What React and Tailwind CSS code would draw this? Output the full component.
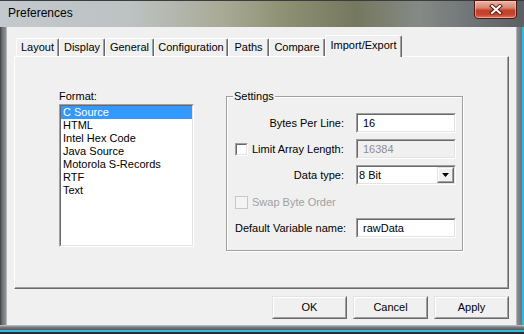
import React from "react";

function Sunken({ className = "", inner = "", children }) {
  return (
    <div className={"border border-t-[#a0a0a0] border-l-[#a0a0a0] border-b-white border-r-white " + className}>
      <div className={"h-full border border-t-[#696969] border-l-[#696969] border-b-[#e3e3e3] border-r-[#e3e3e3] " + inner}>
        {children}
      </div>
    </div>
  );
}

function Raised({ className = "", inner = "", children }) {
  return (
    <div className={"border border-t-[#e3e3e3] border-l-[#e3e3e3] border-b-[#696969] border-r-[#696969] " + className}>
      <div className={"h-full border border-t-white border-l-white border-b-[#a0a0a0] border-r-[#a0a0a0] " + inner}>
        {children}
      </div>
    </div>
  );
}

function Checkbox({ disabled }) {
  return (
    <div
      className={
        disabled
          ? "w-[13px] h-[13px] shrink-0 border border-[#c8c8c8] bg-[#f4f4f4]"
          : "w-[13px] h-[13px] shrink-0 border border-t-[#a0a0a0] border-l-[#a0a0a0] border-b-white border-r-white"
      }
    >
      {!disabled && (
        <div className="h-full border border-t-[#696969] border-l-[#696969] border-b-[#e3e3e3] border-r-[#e3e3e3] bg-white" />
      )}
    </div>
  );
}

const tabs = [
  ["Layout", "w-[43px]"],
  ["Display", "w-[46px]"],
  ["General", "w-[49px]"],
  ["Configuration", "w-[74px]"],
  ["Paths", "w-[41px]"],
  ["Compare", "w-[56px]"],
];

const formats = ["C Source", "HTML", "Intel Hex Code", "Java Source", "Motorola S-Records", "RTF", "Text"];

export default function App() {
  return (
    <div className="w-[524px] h-[334px] overflow-hidden flex flex-col bg-[#5d6163] font-['Liberation_Sans',Arial,sans-serif] text-[11px] leading-[13px] text-black select-none whitespace-nowrap">
      {/* Title bar */}
      <div className="h-[27px] flex items-start bg-[linear-gradient(90deg,#c3c9cd_0%,#bcc2c2_25%,#a9ab97_42%,#8d8f72_55%,#75785f_68%,#858a86_80%,#6f7477_90%,#5b5f62_100%)] border-t border-[#3a3c3d]">
        <div className="pl-[8px] pt-[5px] text-[12px] leading-[15px] text-black">Preferences</div>
        <div className="ml-auto mr-[7px] -mt-[1px] w-[43px] h-[19px] rounded-b-[4px] border border-[#4a1a12] bg-[linear-gradient(180deg,#eab3a6_0%,#d88672_40%,#c2402a_55%,#c8452c_80%,#dc7a5e_100%)] flex items-center justify-center shadow-[inset_0_0_0_1px_rgba(255,220,210,0.5)]">
          <svg width="14" height="11" viewBox="0 0 14 11">
            <path d="M3 2 L11 9 M11 2 L3 9" stroke="#5a1c10" strokeWidth="4" strokeLinecap="square" />
            <path d="M3 2 L11 9 M11 2 L3 9" stroke="#ffffff" strokeWidth="2" strokeLinecap="square" />
          </svg>
        </div>
      </div>

      {/* Body */}
      <div className="flex h-[298px]">
        <div className="w-[7px] bg-[linear-gradient(90deg,#3f4244_0%,#6f7375_35%,#8c9092_80%,#c9cdd0_100%)]" />
        <div className="w-[509px] bg-[#f0f0f0] flex flex-col">
          {/* Tab strip */}
          <div className="flex items-end h-[21px] mt-[8px] ml-[9px]">
            {tabs.map(([label, w]) => (
              <div
                key={label}
                className={
                  w +
                  " h-[18px] flex justify-center pt-[2px] border-t border-l border-white border-r border-r-[#696969] rounded-t-[2px] shadow-[inset_-1px_0_0_#a0a0a0]"
                }
              >
                {label}
              </div>
            ))}
            <div className="w-[77px] h-[22px] -mb-[1px] relative z-10 bg-[#f0f0f0] flex justify-center pt-[3px] border-t border-l border-white border-r border-r-[#696969] rounded-t-[2px] shadow-[inset_-1px_0_0_#a0a0a0]">
              Import/Export
            </div>
          </div>

          {/* Tab panel */}
          <div className="mx-[7px] h-[233px] border border-t-white border-l-white border-b-[#696969] border-r-[#696969] shadow-[inset_-1px_-1px_0_#a0a0a0]">
            <div className="flex items-start pl-[44px] pt-[33px]">
              <div className="w-[135px] flex flex-col">
                <div className="h-[13px]">Format:</div>
                <Sunken className="mt-[1px] h-[143px]" inner="bg-white">
                  <div className="flex flex-col">
                    {formats.map((f, i) => (
                      <div
                        key={f}
                        className={
                          i === 0
                            ? "h-[13px] pl-[2px] bg-[#3399ff] text-white"
                            : "h-[13px] pl-[2px]"
                        }
                      >
                        {f}
                      </div>
                    ))}
                  </div>
                </Sunken>
              </div>

              <div className="ml-[32px] mt-[6px] w-[237px] h-[155px] relative border border-[#a0a0a0] shadow-[inset_1px_1px_0_#ffffff,1px_1px_0_#ffffff]">
                <span className="absolute -top-[7px] left-[6px] px-[1px] bg-[#f0f0f0]">Settings</span>
                <div className="flex flex-col pl-[8px] pt-[16px]">
                  <div className="flex items-center h-[20px]">
                    <div className="w-[109px] text-right">Bytes Per Line:</div>
                    <Sunken className="ml-[12px] w-[100px] h-[20px]" inner="bg-white flex items-center pl-[5px]">
                      16
                    </Sunken>
                  </div>
                  <div className="flex items-center h-[20px] mt-[6px]">
                    <div className="w-[109px] flex items-center">
                      <Checkbox />
                      <span className="ml-[4px]">Limit Array Length:</span>
                    </div>
                    <Sunken className="ml-[12px] w-[100px] h-[20px]" inner="bg-[#f0f0f0] flex items-center pl-[5px] text-[#8d8d8d]">
                      16384
                    </Sunken>
                  </div>
                  <div className="flex items-center h-[20px] mt-[6px]">
                    <div className="w-[109px] text-right">Data type:</div>
                    <Sunken className="ml-[12px] w-[100px] h-[20px]" inner="bg-white flex items-center">
                      <span className="pl-[1px] flex-1">8 Bit</span>
                      <Raised className="w-[17px] h-full" inner="bg-[#f0f0f0] flex items-center justify-center">
                        <svg width="7" height="4" viewBox="0 0 7 4">
                          <path d="M0 0 H7 L3.5 4 Z" fill="#000" />
                        </svg>
                      </Raised>
                    </Sunken>
                  </div>
                  <div className="flex items-center h-[20px] mt-[7px]">
                    <Checkbox disabled />
                    <span className="ml-[4px] text-[#a0a0a0]">Swap Byte Order</span>
                  </div>
                  <div className="flex items-center h-[20px] mt-[6px]">
                    <div className="w-[109px]">Default Variable name:</div>
                    <Sunken className="ml-[12px] w-[100px] h-[20px]" inner="bg-white flex items-center pl-[5px]">
                      rawData
                    </Sunken>
                  </div>
                </div>
              </div>
            </div>
          </div>

          {/* Buttons */}
          <div className="flex justify-end gap-[6px] pr-[7px] mt-[7px]">
            {["OK", "Cancel", "Apply"].map((b) => (
              <Raised key={b} className="w-[75px] h-[23px]" inner="bg-[#f0f0f0] flex items-center justify-center">
                {b}
              </Raised>
            ))}
          </div>
        </div>
        <div className="w-[8px] flex">
          <div className="w-[6px] bg-[linear-gradient(90deg,#c9cdd0_0%,#8a8e90_20%,#6c7072_100%)]" />
          <div className="w-[2px] bg-[#35b9dc]" />
        </div>
      </div>
      <div className="h-[9px] flex flex-col">
        <div className="h-[5px] bg-[linear-gradient(180deg,#c9cdd0_0%,#7c8082_40%,#55595b_100%)]" />
        <div className="h-[2px] bg-[#35b9dc]" />
        <div className="h-[2px] bg-[#2b2e30]" />
      </div>
    </div>
  );
}
